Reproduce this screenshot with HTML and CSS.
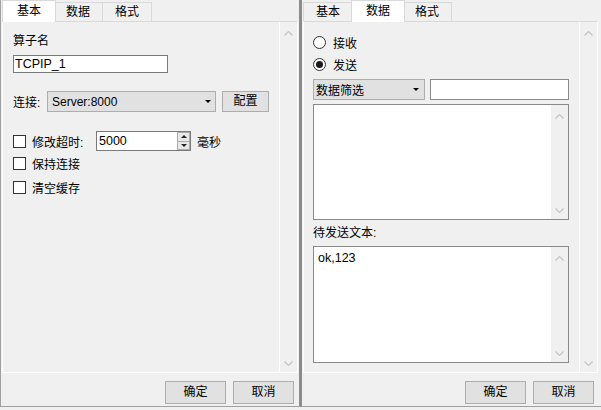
FILE: index.html
```html
<!DOCTYPE html>
<html>
<head>
<meta charset="utf-8">
<link rel="stylesheet" href="styles.css">
</head>
<body>
<div class="app">
  <div class="win win-left">
    <div class="tabbar tabbar-left">
      <div class="tab active">基本</div>
      <div class="tab">数据</div>
      <div class="tab">格式</div>
    </div>
    <div class="pane pane-left">
      <div class="content content-basic">
        <div class="label">算子名</div>
        <div class="textbox name-box">TCPIP_1</div>
        <div class="row conn-row">
          <span class="conn-label">连接:</span>
          <div class="combo conn-combo"><span>Server:8000</span><span class="caret"></span></div>
          <div class="btn cfg-btn">配置</div>
        </div>
        <div class="row chk-row first">
          <span class="chk"></span><span class="chk-text to-label">修改超时:</span>
          <div class="spin">
            <span class="spin-val">5000</span>
            <div class="spin-btns"><span class="spin-up"><i class="tri-up"></i></span><span class="spin-down"><i class="tri-down"></i></span></div>
          </div>
          <span class="unit">毫秒</span>
        </div>
        <div class="row chk-row"><span class="chk"></span><span class="chk-text">保持连接</span></div>
        <div class="row chk-row"><span class="chk"></span><span class="chk-text">清空缓存</span></div>
      </div>
      <div class="vscroll">
        <svg class="chev" width="9" height="5" viewBox="0 0 9 5"><polyline points="0.5,4.5 4.5,0.5 8.5,4.5" fill="none" stroke="#c4c4c4" stroke-width="1.2"/></svg>
        <svg class="chev" width="9" height="5" viewBox="0 0 9 5"><polyline points="0.5,0.5 4.5,4.5 8.5,0.5" fill="none" stroke="#c4c4c4" stroke-width="1.2"/></svg>
      </div>
    </div>
    <div class="footer footer-left">
      <div class="btn act-btn">确定</div>
      <div class="btn act-btn">取消</div>
    </div>
  </div>

  <div class="win win-right">
    <div class="tabbar tabbar-right">
      <div class="tab">基本</div>
      <div class="tab active">数据</div>
      <div class="tab">格式</div>
    </div>
    <div class="pane pane-right">
      <div class="content content-data">
        <div class="radio-row"><span class="radio"></span><span class="radio-text">接收</span></div>
        <div class="radio-row"><span class="radio checked"><i class="dot"></i></span><span class="radio-text">发送</span></div>
        <div class="filter-row">
          <div class="combo filter-combo"><span>数据筛选</span><span class="caret"></span></div>
          <div class="textbox filter-input"></div>
        </div>
        <div class="textarea ta-top">
          <div class="ta-text"></div>
          <div class="ta-scroll">
            <svg class="chev" width="9" height="5" viewBox="0 0 9 5"><polyline points="0.5,4.5 4.5,0.5 8.5,4.5" fill="none" stroke="#c4c4c4" stroke-width="1.2"/></svg>
            <svg class="chev" width="9" height="5" viewBox="0 0 9 5"><polyline points="0.5,0.5 4.5,4.5 8.5,0.5" fill="none" stroke="#c4c4c4" stroke-width="1.2"/></svg>
          </div>
        </div>
        <div class="send-label">待发送文本:</div>
        <div class="textarea ta-bottom">
          <div class="ta-text">ok,123</div>
          <div class="ta-scroll">
            <svg class="chev" width="9" height="5" viewBox="0 0 9 5"><polyline points="0.5,4.5 4.5,0.5 8.5,4.5" fill="none" stroke="#c4c4c4" stroke-width="1.2"/></svg>
            <svg class="chev" width="9" height="5" viewBox="0 0 9 5"><polyline points="0.5,0.5 4.5,4.5 8.5,0.5" fill="none" stroke="#c4c4c4" stroke-width="1.2"/></svg>
          </div>
        </div>
      </div>
      <div class="vscroll">
        <svg class="chev" width="9" height="5" viewBox="0 0 9 5"><polyline points="0.5,4.5 4.5,0.5 8.5,4.5" fill="none" stroke="#c4c4c4" stroke-width="1.2"/></svg>
        <svg class="chev" width="9" height="5" viewBox="0 0 9 5"><polyline points="0.5,0.5 4.5,4.5 8.5,0.5" fill="none" stroke="#c4c4c4" stroke-width="1.2"/></svg>
      </div>
    </div>
    <div class="footer footer-right">
      <div class="btn act-btn">确定</div>
      <div class="btn act-btn">取消</div>
    </div>
  </div>
</div>
</body>
</html>
```

FILE: styles.css
```css
* { box-sizing: border-box; }
html, body { margin: 0; padding: 0; }
body {
  width: 601px;
  height: 410px;
  overflow: hidden;
  background: #f0f0f0;
  font-family: "Liberation Sans", "Noto Sans CJK SC", sans-serif;
  font-size: 12px;
  color: #000;
}
.app { display: flex; height: 407px; }
.win {
  display: flex;
  flex-direction: column;
  height: 407px;
  border-bottom: 1px solid #a0a0a0;
}
.win-left {
  width: 302px;
  border-left: 1px solid #a0a0a0;
  border-right: 3px solid #8c8c8c;
}
.win-right { width: 299px; }

/* tabs */
.tabbar {
  height: 21px;
  display: flex;
  align-items: flex-end;
  position: relative;
  z-index: 2;
}
.tabbar-left { padding-left: 3px; }
.tabbar-right { padding-left: 1px; }
.tab {
  width: 50px;
  height: 19px;
  border: 1px solid #d9d9d9;
  border-bottom: none;
  background: #f0f0f0;
  text-align: center;
  line-height: 18px;
}
.tab + .tab { margin-left: -1px; }
.tab.active {
  height: 22px;
  width: 54px;
  margin: 0 -2px -1px -2px;
  background: #fff;
  line-height: 20px;
  position: relative;
  z-index: 3;
}
.tab.active + .tab { margin-left: -1px; }

/* pane */
.pane {
  flex: 1;
  display: flex;
  border: 1px solid #fff;
  border-top-color: #d9d9d9;
}
.pane-left { margin: 0 1px 0 1px; }
.pane-right { margin: 0 3px 0 1px; }
.content { flex: 1; }
.vscroll {
  width: 18px;
  border-left: 1px solid #fff;
  display: flex;
  flex-direction: column;
  justify-content: space-between;
  align-items: center;
  padding: 9px 0 6px 0;
}
.chev { display: block; }

/* footer */
.footer {
  height: 33px;
  display: flex;
  justify-content: flex-end;
  gap: 7px;
  padding-top: 8px;
}
.footer-left { padding-right: 5px; }
.footer-right { padding-right: 7px; }
.btn {
  height: 23px;
  background: #e1e1e1;
  border: 1px solid #adadad;
  text-align: center;
  line-height: 21px;
}
.act-btn { width: 61px; }

/* basic tab */
.content-basic { padding: 11px 0 0 10px; }
.label { line-height: 16px; }
.textbox {
  background: #fff;
  border: 1px solid #7a7a7a;
}
.name-box {
  margin-top: 6px;
  width: 155px;
  height: 18px;
  padding-left: 1px;
  line-height: 16px;
  font-size: 12.5px;
}
.row { display: flex; align-items: center; }
.conn-row { margin-top: 18px; height: 21px; }
.conn-label { width: 34px; }
.combo {
  height: 21px;
  background: #e1e1e1;
  border: 1px solid #adadad;
  display: flex;
  align-items: center;
  justify-content: space-between;
}
.conn-combo { width: 169px; padding: 0 4px 0 4px; }
.caret {
  width: 0;
  height: 0;
  border-left: 3px solid transparent;
  border-right: 3px solid transparent;
  border-top: 3px solid #000;
}
.cfg-btn { width: 47px; height: 21px; line-height: 19px; margin-left: 6px; }

.chk-row { height: 24px; }
.chk-row.first { margin-top: 19px; height: 20px; }
.chk {
  width: 13px;
  height: 13px;
  border: 1px solid #333;
  background: #fff;
  flex: none;
}
.chk-text { margin-left: 6px; }
.to-label { width: 64px; flex: none; }
.spin {
  width: 95px;
  height: 20px;
  background: #fff;
  border: 1px solid #7a7a7a;
  display: flex;
  align-items: center;
  padding-left: 2px;
  font-size: 12.5px;
}
.spin-btns {
  margin-left: auto;
  width: 13px;
  height: 18px;
  display: flex;
  flex-direction: column;
}
.spin-up, .spin-down {
  flex: 1;
  border: 1px solid #acacac;
  background: #e8e8e8;
  display: flex;
  align-items: center;
  justify-content: center;
}
.spin-down { border-top: none; }
.tri-up, .tri-down {
  width: 0;
  height: 0;
  border-left: 3px solid transparent;
  border-right: 3px solid transparent;
}
.tri-up { border-bottom: 3px solid #222; }
.tri-down { border-top: 3px solid #222; }
.unit { margin-left: 6px; }

/* data tab */
.content-data { padding: 9px 0 0 9px; }
.radio-row { height: 22px; display: flex; align-items: center; }
.radio {
  width: 13px;
  height: 13px;
  border: 1px solid #333;
  border-radius: 50%;
  background: #fff;
  display: flex;
  align-items: center;
  justify-content: center;
}
.dot {
  width: 7px;
  height: 7px;
  border-radius: 50%;
  background: #1a1a1a;
}
.radio-text { margin-left: 7px; }
.filter-row { display: flex; margin-top: 4px; height: 21px; }
.filter-combo { width: 112px; padding: 0 5px 0 2px; }
.filter-input { width: 139px; height: 21px; margin-left: 5px; border-color: #8a8a8a; }
.textarea {
  width: 256px;
  background: #fff;
  border: 1px solid #8a8a8a;
  display: flex;
}
.ta-top { margin-top: 4px; height: 116px; }
.ta-bottom { margin-top: 5px; height: 117px; }
.ta-text { flex: 1; padding: 3px 4px; line-height: 16px; font-size: 12.5px; }
.ta-scroll {
  width: 17px;
  background: #f0f0f0;
  display: flex;
  flex-direction: column;
  justify-content: space-between;
  align-items: center;
  padding: 9px 0 6px 0;
}
.send-label { margin-top: 5px; line-height: 16px; }
```
